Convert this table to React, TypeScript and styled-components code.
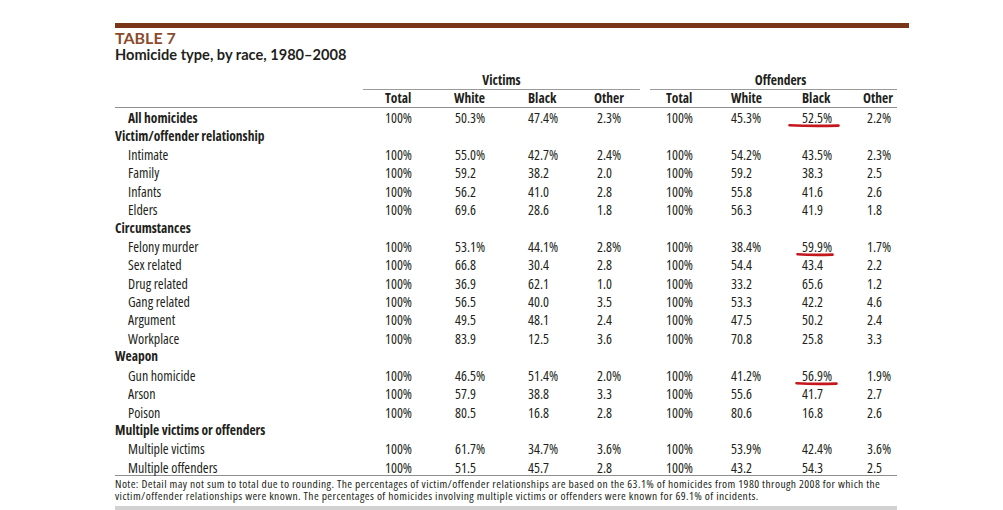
import React from "react";
import styled, { createGlobalStyle } from "styled-components";

const GlobalStyle = createGlobalStyle`
  html, body { margin: 0; padding: 0; background: #ffffff; }
  body {
    font-family: "Open Sans", "DejaVu Sans Condensed", sans-serif;
    font-stretch: 80%;
    color: #231f20;
  }
`;

const COLS = "248px 91px 74px 66px 46px 10px 81px 71px 61px 34px";

const Page = styled.div`
  width: 1003px;
  height: 510px;
  box-sizing: border-box;
  padding: 23px 0 0 115px;
  display: flex;
  flex-direction: column;
  overflow: hidden;
  & > * { flex-shrink: 0; }
`;

const TopRule = styled.div`
  width: 794px;
  height: 5px;
  background: #7a3519;
`;

const Kicker = styled.div`
  margin-top: 1px;
  font-family: Lato, "Open Sans", sans-serif;
  font-stretch: 100%;
  font-weight: 700;
  font-size: 16px;
  line-height: 18px;
  color: #8b4b2d;
`;

const Title = styled.div`
  margin-top: -1px;
  font-family: Lato, "Open Sans", sans-serif;
  font-stretch: 100%;
  font-weight: 700;
  font-size: 14.6px;
  line-height: 17px;
  color: #231f20;
`;

const Table = styled.div`
  margin-top: 8px;
  width: 782px;
  display: flex;
  flex-direction: column;
`;

const Row = styled.div<{ $h: number; $rule?: boolean }>`
  display: grid;
  grid-template-columns: ${COLS};
  height: ${(p) => p.$h}px;
  box-sizing: border-box;
  align-items: center;
  border-bottom: ${(p) => (p.$rule ? "1px solid #8f8f8f" : "none")};
  font-size: 13px;
  white-space: nowrap;
`;

const GroupCell = styled.div<{ $start: number; $shift?: number }>`
  grid-column: ${(p) => p.$start} / span 4;
  align-self: stretch;
  display: flex;
  align-items: center;
  justify-content: center;
  padding-left: ${(p) => p.$shift ?? 0}px;
  border-bottom: 1px solid #9a9a9a;
  font-weight: 700;
  font-size: 13.5px;
`;

const Spacer = styled.div<{ $start: number }>`
  grid-column: ${(p) => p.$start};
`;

const HeadCell = styled.div<{ $pad: number }>`
  padding-left: ${(p) => p.$pad}px;
  font-weight: 700;
  font-size: 13.5px;
`;

const Label = styled.div<{ $indent?: boolean; $bold?: boolean }>`
  padding-left: ${(p) => (p.$indent ? 13 : 0)}px;
  font-weight: ${(p) => (p.$bold ? 700 : 400)};
  font-size: ${(p) => (p.$bold ? 13.5 : 14)}px;
`;

const Value = styled.div<{ $pad: number }>`
  position: relative;
  padding-left: ${(p) => p.$pad}px;
  font-size: 14px;
`;

const Mark = styled.svg`
  position: absolute;
  top: 15px;
  pointer-events: none;
  overflow: visible;
`;

const Note = styled.div`
  margin-top: 2px;
  width: 782px;
  font-size: 11.5px;
  letter-spacing: 0.42px;
  line-height: 12px;
  padding-bottom: 4px;
  border-bottom: 4px solid #d2d2d2;
`;

const NoteLine = styled.div`
  white-space: nowrap;
`;

type Mk = { left: number; width: number };
type Line = {
  label: string;
  section?: boolean;
  bold?: boolean;
  v?: string[];
  o?: string[];
  mark?: Mk;
};

const rows: Line[] = [
  { label: "All homicides", bold: true, v: ["100%", "50.3%", "47.4%", "2.3%"], o: ["100%", "45.3%", "52.5%", "2.2%"], mark: { left: -14, width: 52 } },
  { label: "Victim/offender relationship", section: true },
  { label: "Intimate", v: ["100%", "55.0%", "42.7%", "2.4%"], o: ["100%", "54.2%", "43.5%", "2.3%"] },
  { label: "Family", v: ["100%", "59.2", "38.2", "2.0"], o: ["100%", "59.2", "38.3", "2.5"] },
  { label: "Infants", v: ["100%", "56.2", "41.0", "2.8"], o: ["100%", "55.8", "41.6", "2.6"] },
  { label: "Elders", v: ["100%", "69.6", "28.6", "1.8"], o: ["100%", "56.3", "41.9", "1.8"] },
  { label: "Circumstances", section: true },
  { label: "Felony murder", v: ["100%", "53.1%", "44.1%", "2.8%"], o: ["100%", "38.4%", "59.9%", "1.7%"], mark: { left: -6, width: 38 } },
  { label: "Sex related", v: ["100%", "66.8", "30.4", "2.8"], o: ["100%", "54.4", "43.4", "2.2"] },
  { label: "Drug related", v: ["100%", "36.9", "62.1", "1.0"], o: ["100%", "33.2", "65.6", "1.2"] },
  { label: "Gang related", v: ["100%", "56.5", "40.0", "3.5"], o: ["100%", "53.3", "42.2", "4.6"] },
  { label: "Argument", v: ["100%", "49.5", "48.1", "2.4"], o: ["100%", "47.5", "50.2", "2.4"] },
  { label: "Workplace", v: ["100%", "83.9", "12.5", "3.6"], o: ["100%", "70.8", "25.8", "3.3"] },
  { label: "Weapon", section: true },
  { label: "Gun homicide", v: ["100%", "46.5%", "51.4%", "2.0%"], o: ["100%", "41.2%", "56.9%", "1.9%"], mark: { left: -7, width: 43 } },
  { label: "Arson", v: ["100%", "57.9", "38.8", "3.3"], o: ["100%", "55.6", "41.7", "2.7"] },
  { label: "Poison", v: ["100%", "80.5", "16.8", "2.8"], o: ["100%", "80.6", "16.8", "2.6"] },
  { label: "Multiple victims or offenders", section: true },
  { label: "Multiple victims", v: ["100%", "61.7%", "34.7%", "3.6%"], o: ["100%", "53.9%", "42.4%", "3.6%"] },
  { label: "Multiple offenders", v: ["100%", "51.5", "45.7", "2.8"], o: ["100%", "43.2", "54.3", "2.5"] },
];

const vPad = [22, 1, 0, 3];
const oPad = [16, 0, 0, 4];
const headV = [22, 0, 0, 0];
const headO = [16, 0, 0, 0];
const heads = ["Total", "White", "Black", "Other"];

const RedMark: React.FC<Mk> = ({ left, width }) => (
  <Mark style={{ left }} width={width} height={5} viewBox={`0 0 ${width} 5`}>
    <path
      d={`M1.5 2.2 Q ${width * 0.45} 3.4 ${width - 1.5} 2.6`}
      stroke="#c4161c"
      strokeWidth={2.6}
      strokeLinecap="round"
      fill="none"
    />
  </Mark>
);

export default function App() {
  const rowH = 18.42;
  return (
    <>
      <GlobalStyle />
      <Page>
        <TopRule />
        <Kicker>TABLE 7</Kicker>
        <Title>Homicide type, by race, 1980–2008</Title>
        <Table>
          <Row $h={18}>
            <Spacer $start={1} />
            <GroupCell $start={2}>Victims</GroupCell>
            <Spacer $start={6} />
            <GroupCell $start={7} $shift={14}>Offenders</GroupCell>
          </Row>
          <Row $h={19} $rule>
            <Spacer $start={1} />
            {heads.map((h, i) => (
              <HeadCell key={"v" + h} $pad={headV[i]}>{h}</HeadCell>
            ))}
            <Spacer $start={6} />
            {heads.map((h, i) => (
              <HeadCell key={"o" + h} $pad={headO[i]}>{h}</HeadCell>
            ))}
          </Row>
          {rows.map((r, idx) => (
            <Row key={r.label} $h={rowH} $rule={idx === rows.length - 1}>
              <Label $indent={!r.section} $bold={r.section || r.bold}>{r.label}</Label>
              {r.v && r.v.map((x, i) => <Value key={"v" + i} $pad={vPad[i]}>{x}</Value>)}
              {r.v && <Spacer $start={6} />}
              {r.o &&
                r.o.map((x, i) => (
                  <Value key={"o" + i} $pad={oPad[i]}>
                    {x}
                    {i === 2 && r.mark && <RedMark {...r.mark} />}
                  </Value>
                ))}
            </Row>
          ))}
        </Table>
        <Note>
          <NoteLine>
            Note: Detail may not sum to total due to rounding. The percentages of victim/offender relationships are based on the 63.1% of homicides from 1980 through 2008 for which the
          </NoteLine>
          <NoteLine>
            victim/offender relationships were known. The percentages of homicides involving multiple victims or offenders were known for 69.1% of incidents.
          </NoteLine>
        </Note>
      </Page>
    </>
  );
}
